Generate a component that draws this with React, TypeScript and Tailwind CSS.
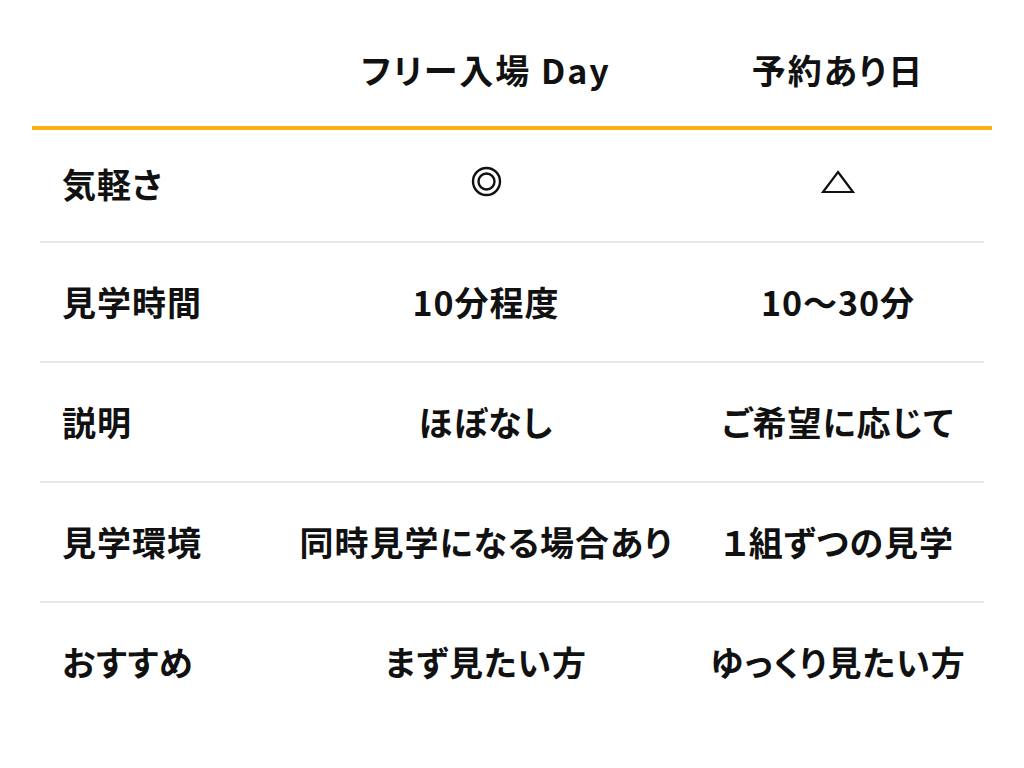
const rows: { label: string; free: string; reserve: string }[] = [
  { label: "気軽さ", free: "◎", reserve: "△" },
  { label: "見学時間", free: "10分程度", reserve: "10〜30分" },
  { label: "説明", free: "ほぼなし", reserve: "ご希望に応じて" },
  { label: "見学環境", free: "同時見学になる場合あり", reserve: "１組ずつの見学" },
  { label: "おすすめ", free: "まず見たい方", reserve: "ゆっくり見たい方" },
];

function Mark({ value }: { value: string }) {
  if (value === "◎") {
    return (
      <svg width="31" height="31" viewBox="0 0 31 31" className="block -mt-[4px]">
        <circle cx="15.5" cy="15.5" r="13.5" fill="none" stroke="#111" strokeWidth="2.4" />
        <circle cx="15.5" cy="15.5" r="8" fill="none" stroke="#111" strokeWidth="2.4" />
      </svg>
    );
  }
  if (value === "△") {
    return (
      <svg width="34" height="24" viewBox="0 0 34 24" className="block -mt-[4px]">
        <path d="M17 2 L32 22 L2 22 Z" fill="none" stroke="#111" strokeWidth="2.2" strokeLinejoin="miter" />
      </svg>
    );
  }
  return <span>{value}</span>;
}

export default function App() {
  return (
    <div
      className="w-[1024px] h-[768px] bg-white text-[#111] font-bold"
      style={{ fontFamily: '"Noto Sans CJK JP", "Noto Sans", sans-serif', fontFeatureSettings: '"palt"' }}
    >
      <div className="px-[40px]">
        <div className="grid grid-cols-[240px_412px_292px] h-[126px] pt-[46px] text-[34px] leading-[48px] tracking-[2px]">
          <div />
          <div className="text-center">フリー入場 Day</div>
          <div className="text-center">予約あり日</div>
        </div>
      </div>
      <div className="mx-[32px] h-[4px] bg-[#f6b20e]" />
      <div className="px-[40px]">
        {rows.map((r, i) => (
          <div
            key={r.label}
            className={`grid grid-cols-[240px_412px_292px] items-center text-[34px] leading-[40px] tracking-[1px] ${
              i === 0 ? "h-[107px] pb-[4px]" : "h-[118px]"
            } ${i < rows.length - 1 ? "border-b-2 border-[#e8e8e8]" : ""} box-content`}
          >
            <div className="pl-[22px]">{r.label}</div>
            <div className="flex justify-center">
              <Mark value={r.free} />
            </div>
            <div className="flex justify-center">
              <Mark value={r.reserve} />
            </div>
          </div>
        ))}
      </div>
    </div>
  );
}
